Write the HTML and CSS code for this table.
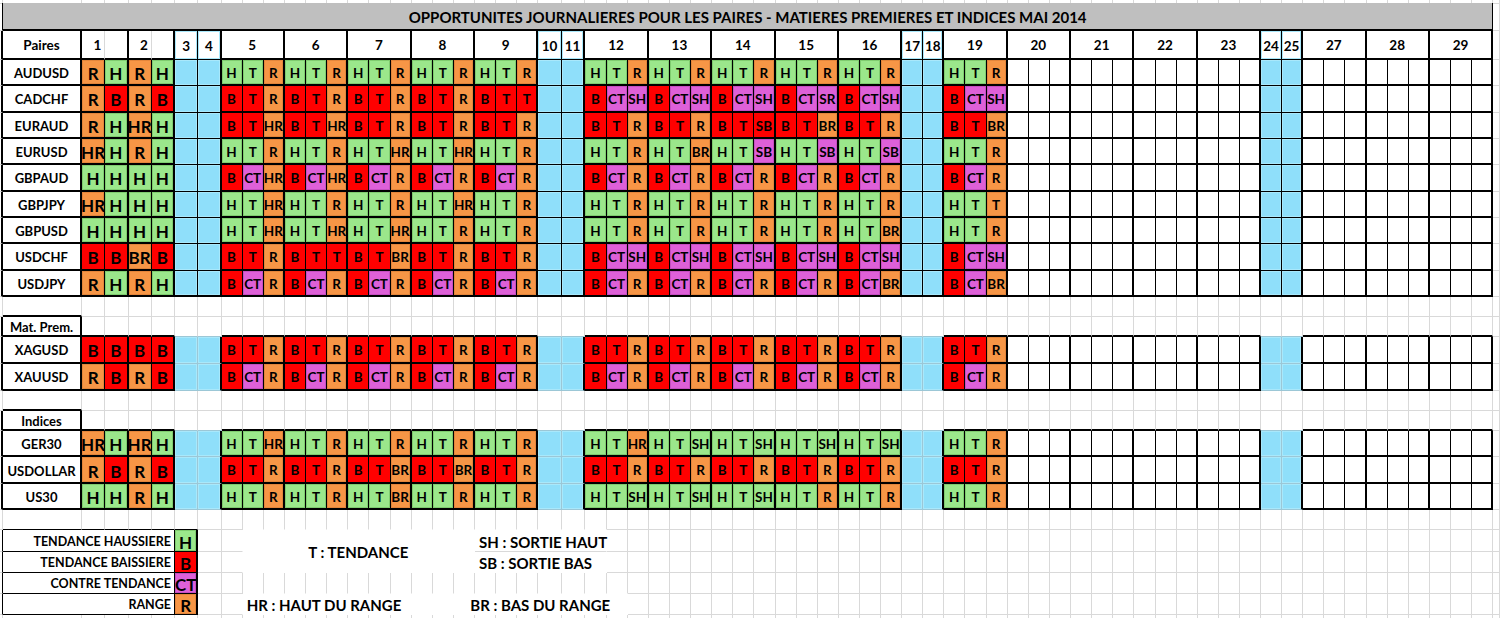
FILE: index.html
```html
<!DOCTYPE html>
<html lang="fr">
<head>
<meta charset="utf-8">
<title>Opportunités journalières - Mai 2014</title>
<link rel="stylesheet" href="styles.css">
</head>
<body>
<div id="sheet" class="sheet"></div>
<script src="script.js"></script>
</body>
</html>
```

FILE: styles.css
```css
html, body {
  margin: 0;
  padding: 0;
  background: #ffffff;
  overflow: hidden;
}

.sheet {
  display: grid;
  width: 1500px;
  height: 618px;
  grid-template-columns:
    3px 79px repeat(6, 23.25px) repeat(15, 21.133px) repeat(2, 23.5px)
    repeat(15, 21.133px) repeat(2, 21px) repeat(15, 21.133px) repeat(2, 21px)
    repeat(9, 21.133px) 1fr;
  grid-template-rows:
    3px 28px 29px repeat(9, 26.333px) 20.5px 19.5px 27px 27px 20px 20px
    repeat(3, 26.5px) 20px 21.5px 21px 21px 21px 1fr;
  font-family: Lato, "Liberation Sans", "DejaVu Sans", sans-serif;
  color: #000;
}

.cell {
  box-sizing: border-box;
  min-width: 0;
  min-height: 0;
  padding-top: 3px;
  border-right: 1px solid #d9d9d9;
  border-bottom: 1px solid #d9d9d9;
  display: flex;
  align-items: center;
  justify-content: center;
  white-space: nowrap;
  font-weight: 700;
  font-size: 13.5px;
  line-height: 1;
}

/* edge styles: g = sheet gridline, n = hidden, b = weekend, k1 = thin, k2 = medium */
.r-n { border-right-color: transparent; }
.r-b { border-right-color: #9cc7d6; }
.r-k1 { border-right-color: #000; }
.r-k2 { border-right: 2px solid #000; }
.b-n { border-bottom-color: transparent; }
.b-b { border-bottom-color: #9cc7d6; }
.b-k1 { border-bottom-color: #000; }
.b-k2 { border-bottom: 2px solid #000; }

/* fills */
.g { background: #9be78b; box-shadow: inset 0 0 0 1px #7fcc6f; }
.o { background: #f79646; box-shadow: inset 0 0 0 1px #e3853b; }
.r { background: #ff0000; }
.p { background: #de60d8; box-shadow: inset 0 0 0 1px #c64fc1; }
.wk { background: #8fdffa; box-shadow: inset 0 0 0 1px #a9e8fb; }
.w { background: #ffffff; }

.title {
  background: #bfbfbf;
  font-size: 15px;
}

.hdr { background: #ffffff; font-size: 13.5px; }
.hdr-r {
  justify-content: flex-end;
  padding-right: 3px;
}
.lab { background: #ffffff; font-size: 13px; }
.big { font-size: 17px; }

.leg {
  background: #ffffff;
  justify-content: flex-end;
  padding-right: 3px;
  font-size: 12.5px;
}

.sw { font-size: 17px; }

.note {
  background: #ffffff;
  font-size: 15px;
}
.note-l {
  justify-content: flex-start;
  padding-left: 4px;
}
```

FILE: script.js
```js
(function () {
  var NC = 69, NR = 27;
  var sheet = document.getElementById('sheet');
  var P = { g: 0, n: 1, b: 2, k1: 3, k2: 4 };
  var V = [], H = [], grid = [];
  var r, c, i, j;
  for (r = 0; r < NR; r++) {
    V.push(new Array(NC).fill('g'));
    H.push(new Array(NC).fill('g'));
    grid.push(new Array(NC).fill(null));
  }
  function setV(r, c, s) {
    if (r < 0 || c < 0 || r >= NR || c >= NC) return;
    if (P[s] > P[V[r][c]]) V[r][c] = s;
  }
  function setH(r, c, s) {
    if (r < 0 || c < 0 || r >= NR || c >= NC) return;
    if (P[s] > P[H[r][c]]) H[r][c] = s;
  }
  function box(r0, r1, c0, c1, s) {
    for (var c = c0; c <= c1; c++) { setH(r0 - 1, c, s); setH(r1, c, s); }
    for (var r = r0; r <= r1; r++) { setV(r, c0 - 1, s); setV(r, c1, s); }
  }
  function cell(r, c, o) {
    o.rs = o.rs || 1; o.cs = o.cs || 1;
    for (var i = r; i < r + o.rs; i++)
      for (var j = c; j < c + o.cs; j++) grid[i][j] = { skip: true };
    grid[r][c] = o;
  }

  /* column segments */
  var segs = [], col = 2;
  function d2(l) { segs.push({ k: 'd2', l: l, s: col }); col += 2; }
  function d3(l) { segs.push({ k: 'd3', l: l, s: col }); col += 3; }
  function we(l) { segs.push({ k: 'w', l: l, s: col }); col += 1; }
  d2('1'); d2('2'); we('3'); we('4');
  ['5', '6', '7', '8', '9'].forEach(d3); we('10'); we('11');
  ['12', '13', '14', '15', '16'].forEach(d3); we('17'); we('18');
  ['19', '20', '21', '22', '23'].forEach(d3); we('24'); we('25');
  ['27', '28', '29'].forEach(d3);
  var LAST = 67;
  var dataDays = { '5': 1, '6': 1, '7': 1, '8': 1, '9': 1, '12': 1, '13': 1, '14': 1, '15': 1, '16': 1, '19': 1 };

  /* title */
  cell(1, 1, { cs: 67, cls: 'title', text: 'OPPORTUNITES JOURNALIERES POUR LES PAIRES - MATIERES PREMIERES ET INDICES MAI 2014' });
  box(1, 1, 1, LAST, 'k1');

  /* header */
  cell(2, 1, { cls: 'hdr', text: 'Paires' });
  box(2, 2, 1, 1, 'k2');
  segs.forEach(function (sg) {
    if (sg.k === 'd2') {
      cell(2, sg.s, { cls: 'hdr hdr-r', text: sg.l });
      cell(2, sg.s + 1, { cls: 'hdr', text: '' });
      box(2, 2, sg.s, sg.s + 1, 'k2');
    } else if (sg.k === 'd3') {
      cell(2, sg.s, { cs: 3, cls: 'hdr', text: sg.l });
      box(2, 2, sg.s, sg.s + 2, 'k2');
    } else {
      cell(2, sg.s, { cls: 'hdr wk', text: sg.l });
      box(2, 2, sg.s, sg.s, 'k1');
    }
  });

  function colorOf(tok, first) {
    var parts = tok.split(':');
    if (parts.length > 1) return parts[1];
    switch (tok) {
      case 'H': return 'g';
      case 'B': return 'r';
      case 'R': case 'HR': case 'BR': return 'o';
      case 'CT': case 'SR': return 'p';
      case 'T': return first === 'B' ? 'r' : 'g';
      case 'SH': return first === 'H' ? 'g' : 'p';
      case 'SB': return first === 'H' ? 'p' : 'r';
    }
    return 'w';
  }
  function rep(s, n) { return new Array(n).fill(s).join('|'); }

  function dataRow(r, name, data, weekendStyle) {
    var groups = data.split('|').map(function (g) { return g.split(' '); });
    var gi = 0;
    cell(r, 1, { cls: 'lab', text: name });
    box(r, r, 1, 1, 'k2');
    segs.forEach(function (sg) {
      if (sg.k === 'w') {
        cell(r, sg.s, { cls: 'wk', text: '' });
        box(r, r, sg.s, sg.s, weekendStyle);
        return;
      }
      var n = sg.k === 'd2' ? 2 : 3;
      var toks = null;
      if (sg.k === 'd2' || dataDays[sg.l]) toks = groups[gi++];
      for (var k = 0; k < n; k++) {
        if (toks) {
          var t = toks[k];
          cell(r, sg.s + k, {
            cls: colorOf(t, toks[0].split(':')[0]) + (sg.k === 'd2' ? ' big' : ''),
            text: t.split(':')[0]
          });
        } else {
          cell(r, sg.s + k, { cls: 'w', text: '' });
        }
        if (k < n - 1) setV(r, sg.s + k, 'k1');
      }
      box(r, r, sg.s, sg.s + n - 1, 'k2');
    });
  }

  /* block A: pairs */
  var pairs = [
    ['AUDUSD', 'R H|R H|' + rep('H T R', 11)],
    ['CADCHF', 'R B|R B|B T R|B T R|B T R|B T R|B T T|B CT SH|B CT SH|B CT SH|B CT SR|B CT SH|B CT SH'],
    ['EURAUD', 'R H|HR H|B T HR|B T HR|B T R|B T R|B T R|B T R|B T R|B T SB|B T BR|B T R|B T BR'],
    ['EURUSD', 'HR H|R H|H T R|H T R|H T HR|H T HR|H T R|H T R|H T BR|H T SB|H T SB|H T SB|H T R'],
    ['GBPAUD', 'H H|H H|B CT HR|B CT HR|' + rep('B CT R', 9)],
    ['GBPJPY', 'HR H|H H|H T HR|H T R|H T R|H T HR|H T R|H T R|H T R|H T R|H T R|H T R|H T T:o'],
    ['GBPUSD', 'H H|H H|H T HR|H T HR|H T HR|H T R|H T R|H T R|H T R|H T R|H T R|H T BR|H T R'],
    ['USDCHF', 'B B|BR B|B T R|B T T|B T BR|B T R|B T R|' + rep('B CT SH', 6)],
    ['USDJPY', 'R H|R H|' + rep('B CT R', 9) + '|B CT BR|B CT BR']
  ];
  pairs.forEach(function (p, k) { dataRow(3 + k, p[0], p[1], 'k1'); });
  box(2, 11, 1, LAST, 'k2');

  /* block B: matieres premieres */
  cell(13, 1, { cls: 'lab', text: 'Mat. Prem.' });
  box(13, 13, 1, 1, 'k2');
  dataRow(14, 'XAGUSD', 'B B|B B|' + rep('B T R', 11), 'b');
  dataRow(15, 'XAUUSD', 'R B|R B|' + rep('B CT R', 11), 'b');

  /* block C: indices */
  cell(17, 1, { cls: 'lab', text: 'Indices' });
  box(17, 17, 1, 1, 'k2');
  dataRow(18, 'GER30', 'HR H|HR H|H T HR|H T R|H T R|H T R|H T R|H T HR|H T SH|H T SH|H T SH|H T SH|H T R', 'b');
  dataRow(19, 'USDOLLAR', 'R B|R B|B T R|B T R|B T BR|B T BR|' + rep('B T R', 7), 'b');
  dataRow(20, 'US30', 'H H|R H|H T R|H T R|H T BR|H T R|H T R|H T SH|H T SH|H T SH|H T R|H T R|H T R', 'b');

  /* legend */
  var leg = [
    ['TENDANCE HAUSSIERE', 'H', 'g'],
    ['TENDANCE BAISSIERE', 'B', 'r'],
    ['CONTRE TENDANCE', 'CT', 'p'],
    ['RANGE', 'R', 'o']
  ];
  leg.forEach(function (l, k) {
    var rr = 22 + k;
    cell(rr, 1, { cs: 5, cls: 'leg', text: l[0] });
    box(rr, rr, 1, 5, 'k1');
    cell(rr, 6, { cls: 'sw ' + l[2], text: l[1] });
    box(rr, rr, 6, 6, 'k1');
    setV(rr, 6, 'k2');
  });
  cell(22, 9, { rs: 2, cs: 11, cls: 'note', text: 'T : TENDANCE' });
  box(22, 23, 9, 19, 'n');
  cell(22, 20, { cs: 6, cls: 'note note-l', text: 'SH : SORTIE HAUT' });
  cell(23, 20, { cs: 6, cls: 'note note-l', text: 'SB : SORTIE BAS' });
  box(22, 23, 20, 25, 'n');
  cell(25, 9, { cs: 10, cls: 'note note-l', text: 'HR : HAUT DU RANGE' });
  box(25, 25, 9, 18, 'n');
  cell(25, 19, { cs: 8, cls: 'note', text: 'BR : BAS DU RANGE' });
  box(25, 25, 19, 26, 'n');

  /* render */
  var frag = document.createDocumentFragment();
  for (r = 0; r < NR; r++) {
    for (c = 0; c < NC; c++) {
      var o = grid[r][c];
      if (o && o.skip) continue;
      if (!o) o = { rs: 1, cs: 1, cls: '', text: '' };
      var rs = 'g', bs = 'g';
      for (i = r; i < r + o.rs; i++) {
        var e = V[i][c + o.cs - 1];
        if (P[e] > P[rs]) rs = e;
      }
      for (j = c; j < c + o.cs; j++) {
        var f = H[r + o.rs - 1][j];
        if (P[f] > P[bs]) bs = f;
      }
      var d = document.createElement('div');
      d.className = 'cell ' + (o.cls || '') + ' r-' + rs + ' b-' + bs;
      d.style.gridArea = (r + 1) + ' / ' + (c + 1) + ' / span ' + o.rs + ' / span ' + o.cs;
      if (o.text) d.textContent = o.text;
      frag.appendChild(d);
    }
  }
  sheet.appendChild(frag);
})();
```
